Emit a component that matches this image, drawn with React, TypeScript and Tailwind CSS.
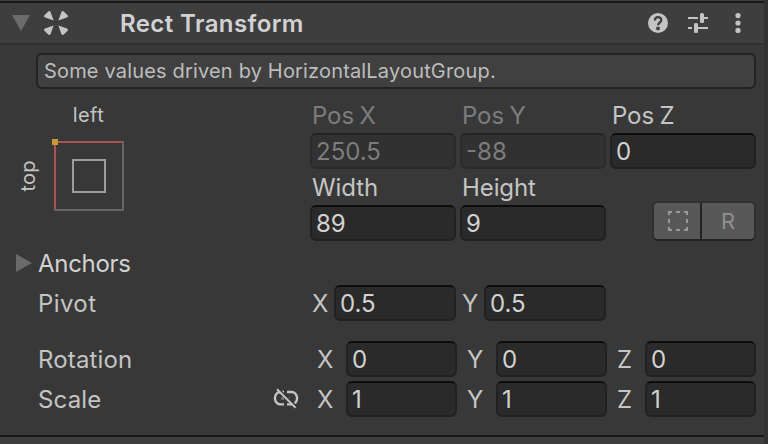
import React from "react";
import clsx from "clsx";

function Field({ value, disabled, className }: { value: string; disabled?: boolean; className?: string }) {
  return (
    <div
      className={clsx(
        "h-9 shrink-0 rounded-md border-2 pl-1 leading-[34px]",
        disabled
          ? "border-[#2b2b2b] border-t-[#222222] bg-[#313131] text-[#7c7c7c]"
          : "border-[#212121] border-t-[#0d0d0d] bg-[#2a2a2a] text-[#d2d2d2]",
        className,
      )}
    >
      {value}
    </div>
  );
}

function Column({ label, value, disabled }: { label: string; value: string; disabled?: boolean }) {
  return (
    <div className="w-[146px] shrink-0">
      <div
        className={clsx(
          "h-9 pl-0.5 leading-[38px] tracking-[-0.1px] [word-spacing:-1px]",
          disabled ? "text-[#7c7c7c]" : "text-[#c4c4c4]",
        )}
      >
        {label}
      </div>
      <Field value={value} disabled={disabled} />
    </div>
  );
}

function Vector({ label, value, icon }: { label: string; value: string; icon?: React.ReactNode }) {
  const axes = ["X", "Y", "Z"];
  return (
    <div className="flex h-9 items-center">
      <div className="w-[235px] pt-0.5 tracking-[0.15px]">{label}</div>
      <div className="flex w-11">{icon}</div>
      <div className="flex h-9">
        {axes.map((axis, i) => (
          <div key={axis} className={clsx("flex", i === 2 ? "w-[139px]" : "w-[150px]")}>
            <span className={clsx("shrink-0 leading-[38px]", i === 2 ? "w-7" : "w-[29px]")}>{axis}</span>
            <Field value={value} className="w-[111px]" />
          </div>
        ))}
      </div>
    </div>
  );
}

function UnlinkIcon() {
  return (
    <svg width="26" height="22" viewBox="0 0 26 22" fill="none" stroke="#c4c4c4" strokeWidth="2.4">
      <path d="M11 4H7.5a5.6 6.2 0 0 0 0 12.4H11" />
      <path d="M14 4h4.5a5.6 6.2 0 0 1 0 12.4H14" />
      <path d="M8 10.5h3M14 10.5h3" stroke="#777777" strokeWidth="2.4" />
      <path d="M5.5 1L24 19" stroke="#383838" strokeWidth="2" />
      <path d="M4 1.2L22.5 19.7" strokeWidth="2" />
    </svg>
  );
}

function AnchorPreview() {
  return (
    <svg width="72" height="72" viewBox="0 0 72 72" fill="none" strokeWidth="2">
      <path d="M71 2v69H2" stroke="#666666" />
      <path d="M3 70V3h67" stroke="#ab5351" />
      <rect x="21" y="21" width="32" height="32" stroke="#9d9d9d" />
      <rect width="6" height="6" fill="#c79b2f" />
    </svg>
  );
}

export default function App() {
  return (
    <div className="flex h-[444px] w-[768px] overflow-hidden bg-[#323232] font-['Inter',sans-serif] text-2xl text-[#c4c4c4]">
      <div className="flex w-[764px] flex-col bg-[#383838]">
        <header className="flex h-[45px] shrink-0 border-b-2 border-[#303030] bg-[#3e3e3e] pt-px">
          <div className="flex w-full items-center border-t-2 border-[#191919]">
            <svg className="ml-3" width="18" height="16" viewBox="0 0 18 16">
              <path d="M0 0h18L9 16z" fill="#6b6b6b" />
            </svg>
            <svg className="ml-3.5" width="24" height="24" viewBox="0 0 24 24" fill="#c4c4c4">
              <path d="M9.6 9.6L1 6.6Q-.2 6 .2 4.6L4.2 .4Q5.8 -.4 6.6 1Z" />
              <path d="M9.6 9.6L1 6.6Q-.2 6 .2 4.6L4.2 .4Q5.8 -.4 6.6 1Z" transform="matrix(-1 0 0 1 24 0)" />
              <path d="M9.6 9.6L1 6.6Q-.2 6 .2 4.6L4.2 .4Q5.8 -.4 6.6 1Z" transform="matrix(1 0 0 -1 0 24)" />
              <path d="M9.6 9.6L1 6.6Q-.2 6 .2 4.6L4.2 .4Q5.8 -.4 6.6 1Z" transform="rotate(180 12 12)" />
            </svg>
            <h1 className="ml-[52px] grow pt-0.5 leading-10 font-semibold tracking-[0.4px] text-[#d2d2d2]">
              Rect Transform
            </h1>
            <svg className="mr-5" width="20" height="20" viewBox="0 0 20 20">
              <circle cx="10" cy="10" r="10" fill="#c4c4c4" />
              <path d="M6.9 7.5C6.9 2.9 13.3 3.2 13.3 7c0 2.6-3.2 2.6-3.2 5.2" fill="none" stroke="#3e3e3e" strokeWidth="2.3" />
              <circle cx="10" cy="15.4" r="1.9" fill="#3e3e3e" />
            </svg>
            <svg className="mr-[27px]" width="20" height="20" viewBox="0 0 20 20" fill="#c4c4c4">
              <path d="M0 4h10v2H0zM16 4h4v2h-4zM0 14h4v2H0zM10 14h10v2H10z" />
              <rect x="12" width="4" height="10" rx="1.5" />
              <rect x="6" y="10" width="4" height="10" rx="1.5" />
            </svg>
            <svg className="mr-[23px]" width="6" height="20" viewBox="0 0 6 20" fill="#c4c4c4">
              <circle cx="3" cy="2.6" r="2.6" />
              <circle cx="3" cy="10" r="2.6" />
              <circle cx="3" cy="17.4" r="2.6" />
            </svg>
          </div>
        </header>

        <div className="mt-2 ml-9 h-9 w-[720px] shrink-0 rounded-md border-2 border-[#232323] bg-[#404040] pl-1.5 text-xl leading-8 tracking-[0.17px] text-[#bdbdbd]">
          Some values driven by HorizontalLayoutGroup.
        </div>

        <section className="mt-2 flex h-36 shrink-0">
          <div className="flex w-[310px] text-xl">
            <div className="flex w-[52px] items-center justify-center pt-[13px] pl-[3px]">
              <span className="-rotate-90 leading-6 tracking-[0.2px]">top</span>
            </div>
            <div className="w-[72px]">
              <div className="h-[42px] pl-px text-center leading-9 tracking-[0.4px]">left</div>
              <AnchorPreview />
            </div>
          </div>
          <div className="w-[446px]">
            <div className="flex gap-1">
              <Column label="Pos X" value="250.5" disabled />
              <Column label="Pos Y" value="-88" disabled />
              <Column label="Pos Z" value="0" />
            </div>
            <div className="flex gap-1">
              <Column label="Width" value="89" />
              <Column label="Height" value="9" />
              <div className="flex grow items-end justify-end">
                <div className="flex h-10 w-[104px] overflow-hidden rounded-md border-2 border-[#303030] border-b-[#242424] bg-[#585858]">
                  <div className="flex w-12 items-center justify-center border-r-2 border-[#242424] pl-0.5">
                    <svg width="20" height="20" viewBox="0 0 20 20" fill="none" stroke="#9a9a9a" strokeWidth="2">
                      <path d="M0 1h4M8 1h4M16 1h4M0 19h4M8 19h4M16 19h4M1 0v4M1 8v4M1 16v4M19 0v4M19 8v4M19 16v4" />
                    </svg>
                  </div>
                  <div className="grow text-center text-[22px] leading-[37px] text-[#8f8f8f]">R</div>
                </div>
              </div>
            </div>
          </div>
        </section>

        <section className="mt-1 flex shrink-0 flex-col gap-1 pl-[38px]">
          <div className="-ml-[22px] flex h-9 items-center text-[#d2d2d2]">
            <svg width="16" height="18" viewBox="0 0 16 18">
              <path d="M0 0l16 9L0 18z" fill="#6b6b6b" />
            </svg>
            <span className="ml-1.5 pt-0.5 tracking-[-0.3px]">Anchors</span>
          </div>
          <div className="flex h-9 items-center">
            <div className="w-[274px] pt-0.5 tracking-[0.4px]">Pivot</div>
            <span className="w-[22px] pt-0.5">X</span>
            <Field value="0.5" className="w-[122px]" />
            <span className="ml-1.5 w-[22px] pt-0.5">Y</span>
            <Field value="0.5" className="w-[122px]" />
          </div>
          <div className="mt-4 flex flex-col gap-1">
            <Vector label="Rotation" value="0" />
            <Vector label="Scale" value="1" icon={<UnlinkIcon />} />
          </div>
        </section>

        <div className="mt-[18px] grow border-t-2 border-[#191919] bg-[#3e3e3e]" />
      </div>
    </div>
  );
}
